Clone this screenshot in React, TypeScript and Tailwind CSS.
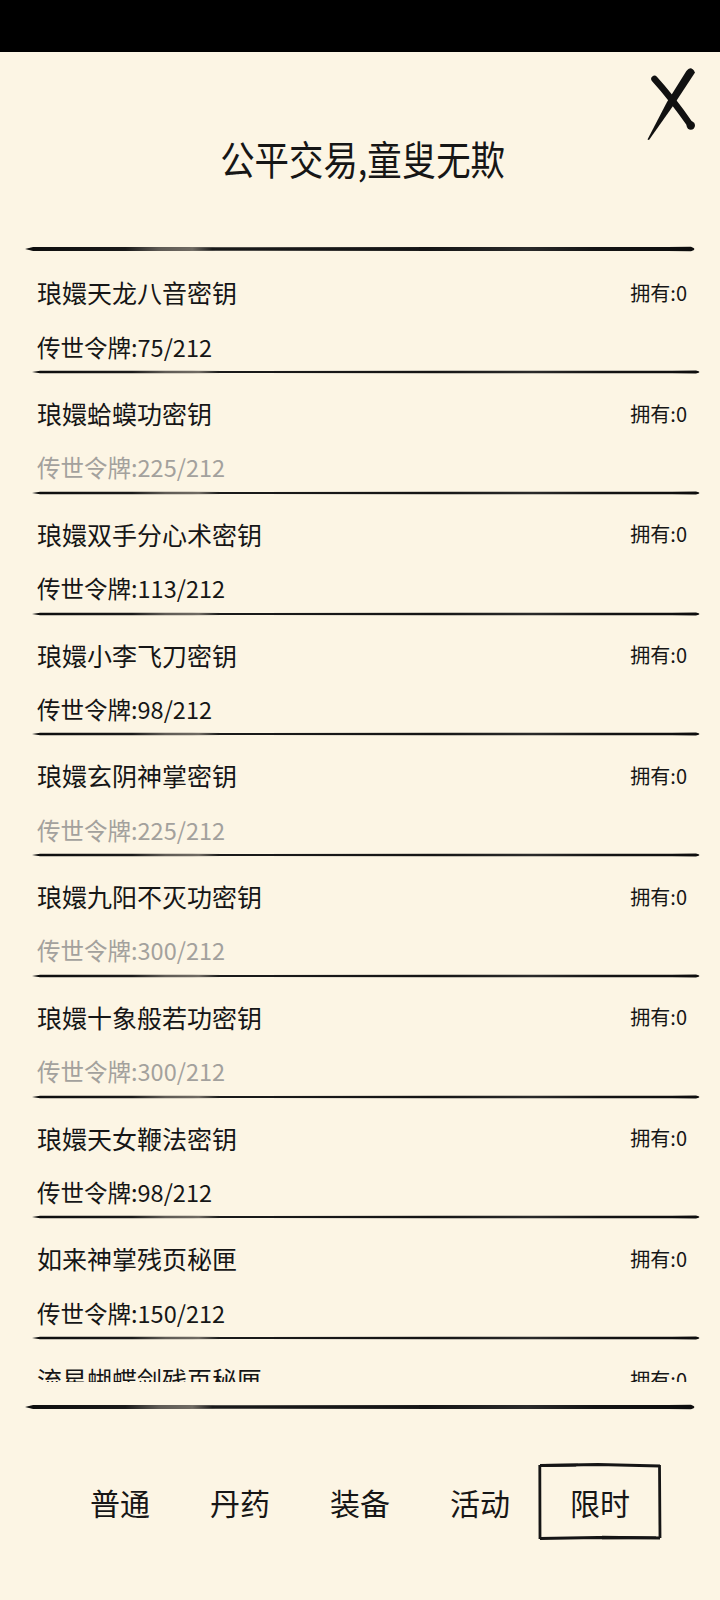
import { useId } from "react";

type Item = { name: string; cost: number };

const TOKENS = 212;

const items: Item[] = [
	{ name: "琅嬛天龙八音密钥", cost: 75 },
	{ name: "琅嬛蛤蟆功密钥", cost: 225 },
	{ name: "琅嬛双手分心术密钥", cost: 113 },
	{ name: "琅嬛小李飞刀密钥", cost: 98 },
	{ name: "琅嬛玄阴神掌密钥", cost: 225 },
	{ name: "琅嬛九阳不灭功密钥", cost: 300 },
	{ name: "琅嬛十象般若功密钥", cost: 300 },
	{ name: "琅嬛天女鞭法密钥", cost: 98 },
	{ name: "如来神掌残页秘匣", cost: 150 },
	{ name: "流星蝴蝶剑残页秘匣", cost: 150 },
];

const tabs = ["普通", "丹药", "装备", "活动", "限时"];

// ink brush line used as a separator
const BrushLine = ({ thick = false }: { thick?: boolean }) => {
	const id = useId();
	const h = thick ? 2.1 : 1.3;
	const d = `M0,3 L8,${3 - h} L160,${3 - h * 0.9} L190,${3 - h * 0.8} L420,${3 - h} L640,${3 - h * 0.9} L664,${3 - h * 1.1} Q671,3 664,${3 + h * 1.1} L640,${3 + h * 0.9} L420,${3 + h} L190,${3 + h * 0.8} L160,${3 + h} L8,${3 + h} Z`;
	return (
		<svg
			viewBox="0 0 670 6"
			preserveAspectRatio="none"
			className="block h-[6px] w-full"
		>
			<defs>
				<linearGradient id={id} x1="0" x2="1" y1="0" y2="0">
					<stop offset="0" stopColor="#0d0d0d" />
					<stop offset="0.15" stopColor="#1a1a1a" />
					<stop offset="0.2" stopColor="#5e5a54" />
					<stop offset="0.25" stopColor="#6f6a62" />
					<stop offset="0.28" stopColor="#1a1a1a" />
					<stop offset="0.6" stopColor="#151515" />
					<stop offset="0.75" stopColor="#2a2a2a" />
					<stop offset="0.85" stopColor="#141414" />
					<stop offset="1" stopColor="#0d0d0d" />
				</linearGradient>
			</defs>
			<path d={d} fill={`url(#${id})`} />
		</svg>
	);
};

const CloseMark = () => (
	<svg viewBox="0 0 60 85" className="h-[85px] w-[60px]">
		{/* rising stroke, tapering to a dry tip */}
		<path
			d="M46.4,11 Q51,5 55,12.5 L33,46 L9,80 L7.5,79.5 L27,42 Z"
			fill="#111"
		/>
		{/* falling stroke with a heavy end */}
		<path
			d="M14.5,19 Q31,37 50.5,65"
			stroke="#111"
			strokeWidth="6.5"
			strokeLinecap="round"
			fill="none"
		/>
		<circle cx="50.8" cy="65.5" r="4.2" fill="#111" />
	</svg>
);

// rough hand-drawn frame around the active tab
const InkFrame = () => (
	<svg
		viewBox="0 0 124 77"
		preserveAspectRatio="none"
		className="absolute left-[-2px] top-0 h-[77px] w-[124px]"
	>
		<path
			d="M2,2.5 L60,1.5 L122,3 M121.5,2 L122,75 M122,75 L60,74.5 L2,75.5 M2,76 L1.8,2"
			stroke="#151515"
			strokeWidth="2.8"
			fill="none"
		/>
		<path d="M4,1 L40,0.8 L38,3.5 L4,4 Z" fill="#151515" />
		<path d="M64,72.8 L118,73.5 L118,76 L64,76.2 Z" fill="#151515" />
	</svg>
);

const Row = ({ item }: { item: Item }) => {
	const short = item.cost > TOKENS;
	return (
		<div className="flex h-[120.75px] shrink-0 flex-col">
			<div className="flex h-[78px] items-center justify-between pl-[37px] pr-[33px]">
				<span className="text-[25px] leading-none text-[#161616]">
					{item.name}
				</span>
				<span className="text-[20px] leading-none text-[#161616]">
					拥有:0
				</span>
			</div>
			<div className="flex h-[32px] items-center pl-[37px]">
				<span
					className={
						short
							? "text-[23.5px] leading-none text-[#a3a19d]"
							: "text-[23.5px] leading-none text-[#161616]"
					}
				>
					传世令牌:{item.cost}/{TOKENS}
				</span>
			</div>
			<div className="ml-[32px] mr-[18px] mt-[5.75px]">
				<BrushLine />
			</div>
		</div>
	);
};

export default function App() {
	return (
		<div className="min-h-screen w-[720px] bg-[#fcf5e4] font-['Noto_Sans_CJK_SC','Noto_Sans',sans-serif] text-[#161616]">
			<div className="h-[52px] bg-black" />

			<header className="relative h-[194px]">
				<h1 className="pt-[86px] text-center text-[40px] font-normal leading-[40px]">
					<span className="inline-block translate-x-[3px] scale-x-[0.86]">
						公平交易,童叟无欺
					</span>
				</h1>
				<button className="absolute left-[640px] top-[8px]">
					<CloseMark />
				</button>
			</header>

			<div className="ml-[25px] w-[672px]">
				<BrushLine thick />
			</div>

			<section className="flex h-[1130px] flex-col overflow-hidden pt-[2.25px]">
				{items.map((item, index) => (
					<Row key={index} item={item} />
				))}
			</section>

			<div className="ml-[25px] mt-[22px] w-[672px]">
				<BrushLine thick />
			</div>

			<nav className="mt-[53px] grid grid-cols-5 px-[60px]">
				{tabs.map((tab, index) => (
					<div
						key={tab}
						className="relative flex h-[77px] items-center justify-center text-[30px] leading-none"
					>
						{index === tabs.length - 1 && <InkFrame />}
						{tab}
					</div>
				))}
			</nav>
		</div>
	);
}
